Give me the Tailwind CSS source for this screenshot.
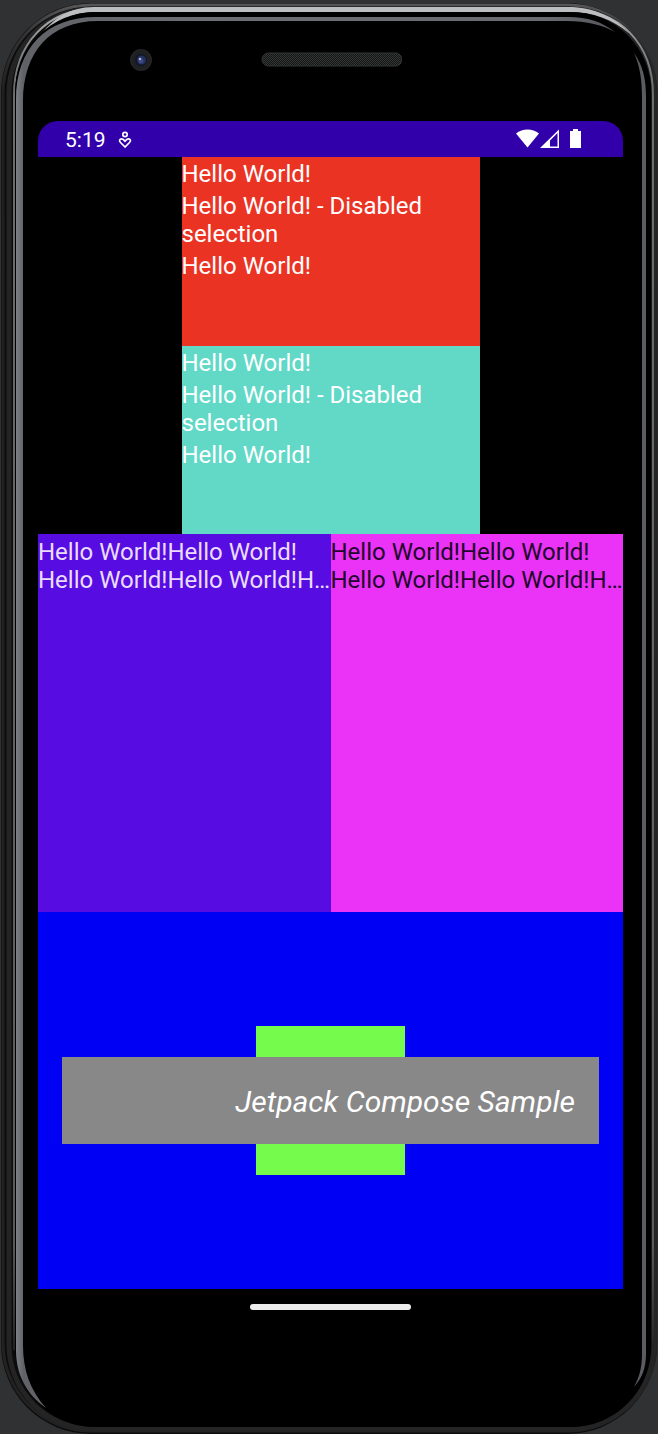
<!DOCTYPE html>
<html lang="en">
<head>
<meta charset="utf-8">
<meta name="viewport" content="width=device-width, initial-scale=1">
<title>Jetpack Compose Sample</title>
<script src="https://cdn.jsdelivr.net/npm/@tailwindcss/browser@4"></script>
</head>
<body class="bg-[#303133] font-[Roboto,sans-serif]">
<div class="relative isolate flex min-h-screen flex-col overflow-hidden pr-[35px] pl-[38px]">
  <!-- Phone body -->
  <svg class="absolute inset-0 -z-10 h-full w-full" viewBox="0 0 658 1434" preserveAspectRatio="none" fill="none" aria-hidden="true">
    <defs>
      <linearGradient id="rim" x1="0" y1="9" x2="0" y2="1350" gradientUnits="userSpaceOnUse">
        <stop offset="0" stop-color="#b4b6b8"/><stop offset=".025" stop-color="#88898b"/><stop offset=".06" stop-color="#6c6d6f"/><stop offset=".92" stop-color="#5a5a5c"/><stop offset="1" stop-color="#222" />
      </linearGradient>
      <linearGradient id="edge" x1="0" y1="0" x2="0" y2="1">
        <stop offset="0" stop-color="#555556"/><stop offset=".02" stop-color="#343435"/><stop offset=".06" stop-color="#202021"/><stop offset="1" stop-color="#222223"/>
      </linearGradient>
      <linearGradient id="glow" x1="16" y1="0" x2="640" y2="0" gradientUnits="userSpaceOnUse">
        <stop offset="0" stop-color="#7d7f84"/><stop offset=".012" stop-color="#606268"/><stop offset=".3" stop-color="#6c6e74"/><stop offset=".85" stop-color="#696b70"/><stop offset="1" stop-color="#4c4e54"/>
      </linearGradient>
    </defs>
    <rect x="1" y="3" width="656" height="1431" rx="90" fill="#0c0c0c"/>
    <rect x="3" y="5" width="653" height="1426" rx="88" stroke="url(#edge)" stroke-width="3"/>
    <rect x="9" y="9" width="645" height="1420" rx="84" stroke="#242425" stroke-width="5"/>
    <path d="M14 1350V95C14 44 48 9 94 9H568C620 9 653 44 653 95V1350" stroke="url(#rim)" stroke-width="2"/>
    <path d="M38 38C52 19 70 7 94 7H568C594 7 614 17 630 34C612 19 594 12 568 12H96C72 12 54 22 38 38Z" fill="#bcbec0"/>
    <rect x="15" y="12" width="636" height="1415" rx="80" fill="#000"/>
    <path d="M16 1350V100C16 48 46 17 96 17H568C588 17 602 22 615 32C602 25 588 21 566 21H98C50 21 23 52 23 102V1345C23 1370 30 1390 46 1408C26 1394 16 1374 16 1350Z" fill="url(#glow)"/>
    <path d="M634 53C643 66 646 78 646 98V1354C646 1368 642 1378 634 1387C639 1378 642 1368 642 1354V98C642 80 640 66 634 53Z" fill="#5b5c62"/>
  </svg>

  <!-- Camera and speaker -->
  <div class="grid h-[121px] grid-cols-[1fr_142px_1fr] items-start">
    <svg class="mt-12 ml-[91px] h-6 w-6" viewBox="0 0 24 24" aria-hidden="true">
      <circle cx="12" cy="12" r="11" fill="#202022"/><circle cx="12" cy="12" r="10" fill="none" stroke="#303032" stroke-dasharray="1 1"/>
      <circle cx="12" cy="12" r="6" fill="#111629"/><circle cx="12.500" cy="12" r="4.500" fill="#26305d"/><circle cx="12" cy="13" r="2.500" fill="#3c4880"/><circle cx="11" cy="11" r="1.300" fill="#a9b4d8"/>
    </svg>
    <svg class="mt-[52px] h-4 w-[142px]" viewBox="0 0 142 16" aria-hidden="true">
      <defs><pattern id="mesh" width="2" height="2" patternUnits="userSpaceOnUse"><rect width="2" height="2" fill="#151616"/><path d="M0 0h1v1H0zM1 1h1v1H1z" fill="#333434"/></pattern></defs>
      <rect x="2" y="1" width="140" height="13" rx="6.500" fill="url(#mesh)" stroke="#333434"/>
    </svg>
  </div>

  <main class="flex flex-col">
    <header class="flex h-9 items-center justify-between rounded-t-[20px] bg-[#3200ab] pr-[41px] pl-[27px] text-white">
      <div class="flex items-center gap-3 pt-px">
        <span class="text-[21px] leading-6">5:19</span>
        <svg class="h-[18px] w-4" viewBox="1 0 16 18" fill="none" stroke="#fff" stroke-width="1.700" aria-hidden="true">
          <circle cx="8" cy="3.500" r="2.200"/><path d="M8 16L3.500 11.500C1.500 9.500 3 7.600 4.800 7.800C6.300 8 7 9 8 10.200C9 9 9.700 8 11.200 7.800C13 7.600 14.500 9.500 12.500 11.500Z"/>
        </svg>
      </div>
      <svg class="h-5 w-[66px]" viewBox="0 0 66 20" fill="#fff" aria-hidden="true">
        <path d="M0 4.500C6.500-.8 16.500-.8 23 4.500L11.500 18.500Z"/>
        <path d="M24 19L43 .5V19ZM34 17.500H41.500V4L34 11.500Z" fill-rule="evenodd"/>
        <path d="M54 2H57V0H62V2H65V19H54Z"/>
      </svg>
    </header>

    <section class="flex flex-col items-center bg-black text-2xl leading-7 text-white">
      <div class="flex h-[189px] w-[298px] flex-col gap-1 bg-[#eb3324] pt-[3px]">
        <p>Hello World!</p><p>Hello World! - Disabled selection</p><p>Hello World!</p>
      </div>
      <div class="flex h-[188px] w-[298px] flex-col gap-1 bg-[#62d8c7] pt-[3px]">
        <p>Hello World!</p><p>Hello World! - Disabled selection</p><p>Hello World!</p>
      </div>
    </section>

    <section class="grid h-[378px] grid-cols-2 text-2xl leading-7">
      <div class="min-w-0 bg-[#570ce2] pt-1 text-[#eadcfb]">
        <p>Hello World!Hello World!</p><p class="truncate">Hello World!Hello World!Hello World!</p>
      </div>
      <div class="min-w-0 bg-[#eb33f7] pt-1 text-[#22052a]">
        <p>Hello World!Hello World!</p><p class="truncate">Hello World!Hello World!Hello World!</p>
      </div>
    </section>

    <section class="grid h-[377px] place-items-center bg-[#0000f5] px-6">
      <div class="col-start-1 row-start-1 h-[149px] w-[149px] bg-[#75fb4c]"></div>
      <h1 class="col-start-1 row-start-1 w-full bg-[#888888] px-6 pt-[25px] pb-[22px] text-right text-[30px] leading-10 text-white italic">Jetpack Compose Sample</h1>
    </section>

    <div class="flex justify-center pt-[15px]"><div class="h-1.5 w-[161px] rounded-full bg-[#ececec]"></div></div>
  </main>
</div>
</body>
</html>
